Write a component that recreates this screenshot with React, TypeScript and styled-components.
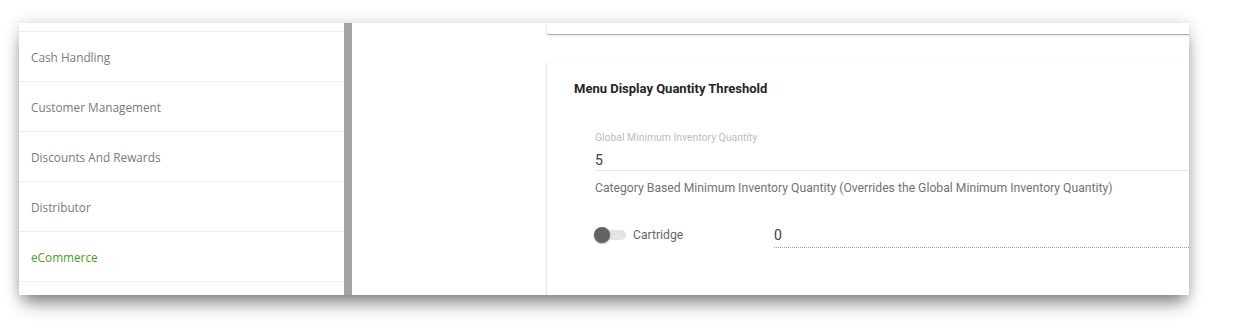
import React from 'react'
import styled, { createGlobalStyle } from 'styled-components'

const GlobalStyle = createGlobalStyle`
  html, body {
    margin: 0;
    padding: 0;
    background: #ffffff;
  }
  * {
    box-sizing: border-box;
  }
`

const Page = styled.div`
  width: 1236px;
  height: 330px;
  padding: 23px 0 0 19px;
  overflow: hidden;
`

const Window = styled.div`
  display: flex;
  width: 1170px;
  height: 272px;
  background: #ffffff;
  overflow: hidden;
  box-shadow: 0 12px 16px -4px rgba(0, 0, 0, 0.45),
    0 0 14px rgba(0, 0, 0, 0.16);
`

const Sidebar = styled.nav`
  width: 325px;
  flex-shrink: 0;
  overflow: hidden;
`

const SidebarList = styled.ul`
  list-style: none;
  margin: -41px 0 0;
  padding: 0;
`

const SidebarItem = styled.li<{ active?: boolean }>`
  display: flex;
  align-items: center;
  height: 50px;
  padding: 0 12px;
  border-bottom: 1px solid #efefef;
  font-family: 'Open Sans', 'Liberation Sans', sans-serif;
  font-size: 11.8px;
  color: ${props => (props.active ? '#45a321' : '#7a7a7a')};
`

const Scrollbar = styled.div`
  width: 8px;
  flex-shrink: 0;
  background: #a3a3a3;
`

const Main = styled.main`
  flex: 1;
  min-width: 0;
  display: flex;
  flex-direction: column;
  gap: 28px;
  padding-left: 195px;
  overflow: hidden;
`

const Card = styled.section`
  margin-right: -40px;
  background: #ffffff;
  border-radius: 2px;
  box-shadow: 0 1px 3px rgba(0, 0, 0, 0.2), 0 1px 1px rgba(0, 0, 0, 0.12),
    0 2px 1px -1px rgba(0, 0, 0, 0.1);
`

const CardTail = styled(Card)`
  height: 11px;
`

const ThresholdCard = styled(Card)`
  flex: 1;
  padding: 18px 0 0 27px;
  font-family: Roboto, 'Liberation Sans', sans-serif;
`

const CardTitle = styled.h3`
  margin: 0;
  font-size: 13px;
  line-height: 18px;
  font-weight: 700;
  color: #262626;
`

const Form = styled.div`
  display: flex;
  flex-direction: column;
  margin: 34px 0 0 21px;
`

const FieldLabel = styled.label`
  font-size: 10.4px;
  line-height: 12px;
  color: #bdbdbd;
`

const TextField = styled.div<{ dotted?: boolean }>`
  font-size: 14px;
  line-height: 20px;
  color: #3c3c3c;
  border-bottom: 1px ${props => (props.dotted ? 'dotted #9e9e9e' : 'solid #e6e6e6')};
`

const GlobalField = styled(TextField)`
  margin-top: 6px;
`

const HelpText = styled.p`
  margin: 9px 0 0;
  font-size: 12.2px;
  line-height: 16px;
  color: #737373;
`

const CategoryRow = styled.div`
  display: flex;
  align-items: flex-start;
  margin-top: 27px;
`

const ToggleArea = styled.div`
  display: flex;
  align-items: center;
  height: 24px;
`

const Toggle = styled.span`
  position: relative;
  width: 32px;
  height: 16px;
  margin-left: -1px;
`

const ToggleTrack = styled.span`
  position: absolute;
  left: 2px;
  top: 3px;
  width: 30px;
  height: 10px;
  border-radius: 5px;
  background: #e4e4e4;
`

const ToggleThumb = styled.span`
  position: absolute;
  left: 0;
  top: 0;
  width: 16px;
  height: 16px;
  border-radius: 50%;
  background: #636363;
  box-shadow: 0 1px 2px rgba(0, 0, 0, 0.3);
`

const CategoryName = styled.span`
  width: 148px;
  padding-left: 7px;
  font-size: 12.2px;
  line-height: 24px;
  color: #666666;
`

const CategoryField = styled(TextField)`
  flex: 1;
  margin-top: 2px;
  padding-bottom: 2px;
`

const menuItems = [
  '',
  'Cash Handling',
  'Customer Management',
  'Discounts And Rewards',
  'Distributor',
  'eCommerce',
  '',
]

const App: React.FC = () => (
  <>
    <GlobalStyle />
    <Page>
      <Window>
        <Sidebar>
          <SidebarList>
            {menuItems.map((item, i) => (
              <SidebarItem key={i} active={item === 'eCommerce'}>
                {item}
              </SidebarItem>
            ))}
          </SidebarList>
        </Sidebar>
        <Scrollbar />
        <Main>
          <CardTail />
          <ThresholdCard>
            <CardTitle>Menu Display Quantity Threshold</CardTitle>
            <Form>
              <FieldLabel>Global Minimum Inventory Quantity</FieldLabel>
              <GlobalField>5</GlobalField>
              <HelpText>
                Category Based Minimum Inventory Quantity (Overrides the Global
                Minimum Inventory Quantity)
              </HelpText>
              <CategoryRow>
                <ToggleArea>
                  <Toggle>
                    <ToggleTrack />
                    <ToggleThumb />
                  </Toggle>
                </ToggleArea>
                <CategoryName>Cartridge</CategoryName>
                <CategoryField dotted>0</CategoryField>
              </CategoryRow>
            </Form>
          </ThresholdCard>
        </Main>
      </Window>
    </Page>
  </>
)

export default App
